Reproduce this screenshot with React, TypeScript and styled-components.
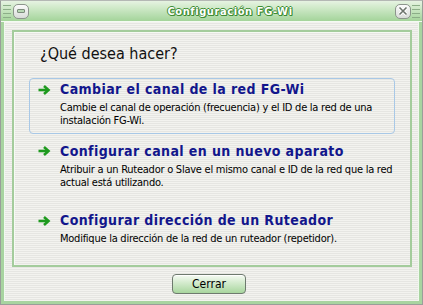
import React from "react";
import styled, { createGlobalStyle } from "styled-components";

const Global = createGlobalStyle`
  html, body { margin: 0; padding: 0; background: #ffffff; }
  body { font-family: "DejaVu Sans Condensed", "DejaVu Sans", sans-serif; }
  * { box-sizing: border-box; }
`;

const stripes = `repeating-linear-gradient(to bottom, #f3f3ef 0px, #f3f3ef 1px, #e6e6e2 1px, #e6e6e2 2px)`;

const Window = styled.div`
  width: 423px;
  height: 305px;
  display: flex;
  flex-direction: column;
  border: 1px solid #9a9e9a;
  border-top-color: #b4b8b4;
  background: #a8d4a0;
`;

const TitleBar = styled.div`
  height: 21px;
  display: flex;
  align-items: center;
  padding: 0 2px 0 2px;
  background: linear-gradient(to bottom, #e6f3e2 0%, #cfe9c8 35%, #b4dcac 75%, #a4d49a 100%);
  border-bottom: 1px solid #f4faf2;
`;

const Grip = styled.div`
  width: 8px;
  height: 13px;
  display: flex;
  flex-direction: column;
  justify-content: space-between;
  span {
    display: block;
    height: 1px;
    background: #8cae88;
  }
`;

const TitleBtn = styled.div<{ $side: "left" | "right" }>`
  width: 16px;
  height: 15px;
  margin: ${(p) => (p.$side === "left" ? "0 0 0 2px" : "0 1px 0 0")};
  border: 1px solid #8c948c;
  border-radius: 5px;
  background: linear-gradient(to bottom, #fbfbfb, #d8dcd8);
  display: flex;
  align-items: center;
  justify-content: center;
`;

const MinBar = styled.div`
  width: 8px;
  height: 4px;
  border: 1px solid #7c8c7c;
  background: #b8d8b4;
  border-radius: 1px;
`;

const TitleText = styled.div`
  flex: 1;
  text-align: center;
  padding-left: 36px;
  font-family: "DejaVu Sans Condensed", "DejaVu Sans", sans-serif;
  font-weight: bold;
  font-size: 11px;
  color: #ffffff;
  letter-spacing: 0.6px;
  text-shadow: 1px 0 0 #3e8c34, -1px 0 0 #3e8c34, 0 1px 0 #3e8c34, 0 -1px 0 #3e8c34, 1px 1px 0 #3e8c34;
`;

const Body = styled.div`
  flex: 1;
  display: flex;
  flex-direction: column;
  background: ${stripes};
  margin: 0 3px 3px 3px;
  border-left: 1px solid #f0f8ee;
  border-right: 1px solid #f0f8ee;
  padding: 8px 6px 0 7px;
`;

const Panel = styled.div`
  height: 237px;
  border: 2px solid #a4cc9c;
  box-shadow: inset 1px 1px 0 #f6faf4;
  display: flex;
  flex-direction: column;
  padding: 12px 15px 0 15px;
`;

const Heading = styled.div`
  font-size: 16px;
  line-height: 19px;
  color: #111111;
  padding-left: 11px;
  margin-bottom: 15px;
`;

const Item = styled.div<{ $active?: boolean; $gap: number }>`
  margin-top: ${(p) => p.$gap}px;
  height: 56px;
  border: 1px solid ${(p) => (p.$active ? "#a8c8e6" : "transparent")};
  border-radius: 4px;
  display: grid;
  grid-template-columns: 22px 1fr;
  grid-template-rows: auto auto;
  align-content: start;
  column-gap: 0;
  padding: 2px 0 0 8px;
`;

const Arrow = styled.svg`
  width: 13px;
  height: 10px;
  align-self: center;
  margin-top: 0px;
`;

const ItemTitle = styled.div`
  font-weight: bold;
  font-size: 14px;
  line-height: 17px;
  letter-spacing: 0.4px;
  color: #12168c;
  white-space: nowrap;
`;

const ItemDesc = styled.div`
  grid-column: 2;
  font-size: 11px;
  line-height: 13px;
  letter-spacing: -0.25px;
  color: #000000;
  margin-top: 3px;
  margin-right: -2px;
`;

const Footer = styled.div`
  flex: 1;
  display: flex;
  align-items: center;
  justify-content: center;
  padding-right: 6px;
  padding-bottom: 1px;
`;

const Button = styled.button`
  width: 74px;
  height: 20px;
  border: 1px solid #6e7a6e;
  border-radius: 4px;
  background: linear-gradient(to bottom, #f6fbf4 0%, #d6ecd0 40%, #a8d69e 100%);
  box-shadow: inset 0 1px 0 #ffffff;
  font-family: "DejaVu Sans Condensed", "DejaVu Sans", sans-serif;
  font-size: 12px;
  color: #000;
  padding: 0;
`;

const ArrowIcon = () => (
  <Arrow viewBox="0 0 13 10">
    <path d="M0.5 5 H10" stroke="#1e9a1e" strokeWidth="2.6" fill="none" />
    <path d="M6 1 L10.5 5 L6 9" stroke="#1e9a1e" strokeWidth="2.6" fill="none" strokeLinejoin="miter" />
  </Arrow>
);

const items = [
  {
    title: "Cambiar el canal de la red FG-Wi",
    desc: "Cambie el canal de operación (frecuencia) y el ID de la red de una instalación FG-Wi.",
    active: true,
    gap: 0,
  },
  {
    title: "Configurar canal en un nuevo aparato",
    desc: "Atribuir a un Ruteador o Slave el mismo canal e ID de la red que la red actual está utilizando.",
    active: false,
    gap: 6,
  },
  {
    title: "Configurar dirección de un Ruteador",
    desc: "Modifique la dirección de la red de un ruteador (repetidor).",
    active: false,
    gap: 14,
  },
];

export default function App() {
  return (
    <>
      <Global />
      <Window>
        <TitleBar>
          <Grip>
            <span />
            <span />
            <span />
            <span />
          </Grip>
          <TitleBtn $side="left">
            <MinBar />
          </TitleBtn>
          <TitleText>Configuración FG-Wi</TitleText>
          <TitleBtn $side="right">
            <svg width="10" height="10" viewBox="0 0 10 10">
              <path d="M1.5 1.5 L8.5 8.5 M8.5 1.5 L1.5 8.5" stroke="#ffffff" strokeWidth="3.2" />
              <path d="M1.5 1.5 L8.5 8.5 M8.5 1.5 L1.5 8.5" stroke="#6c746c" strokeWidth="1.6" />
            </svg>
          </TitleBtn>
          <Grip>
            <span />
            <span />
            <span />
            <span />
          </Grip>
        </TitleBar>
        <Body>
          <Panel>
            <Heading>¿Qué desea hacer?</Heading>
            {items.map((it) => (
              <Item key={it.title} $active={it.active} $gap={it.gap}>
                <ArrowIcon />
                <ItemTitle>{it.title}</ItemTitle>
                <ItemDesc>{it.desc}</ItemDesc>
              </Item>
            ))}
          </Panel>
          <Footer>
            <Button>Cerrar</Button>
          </Footer>
        </Body>
      </Window>
    </>
  );
}
